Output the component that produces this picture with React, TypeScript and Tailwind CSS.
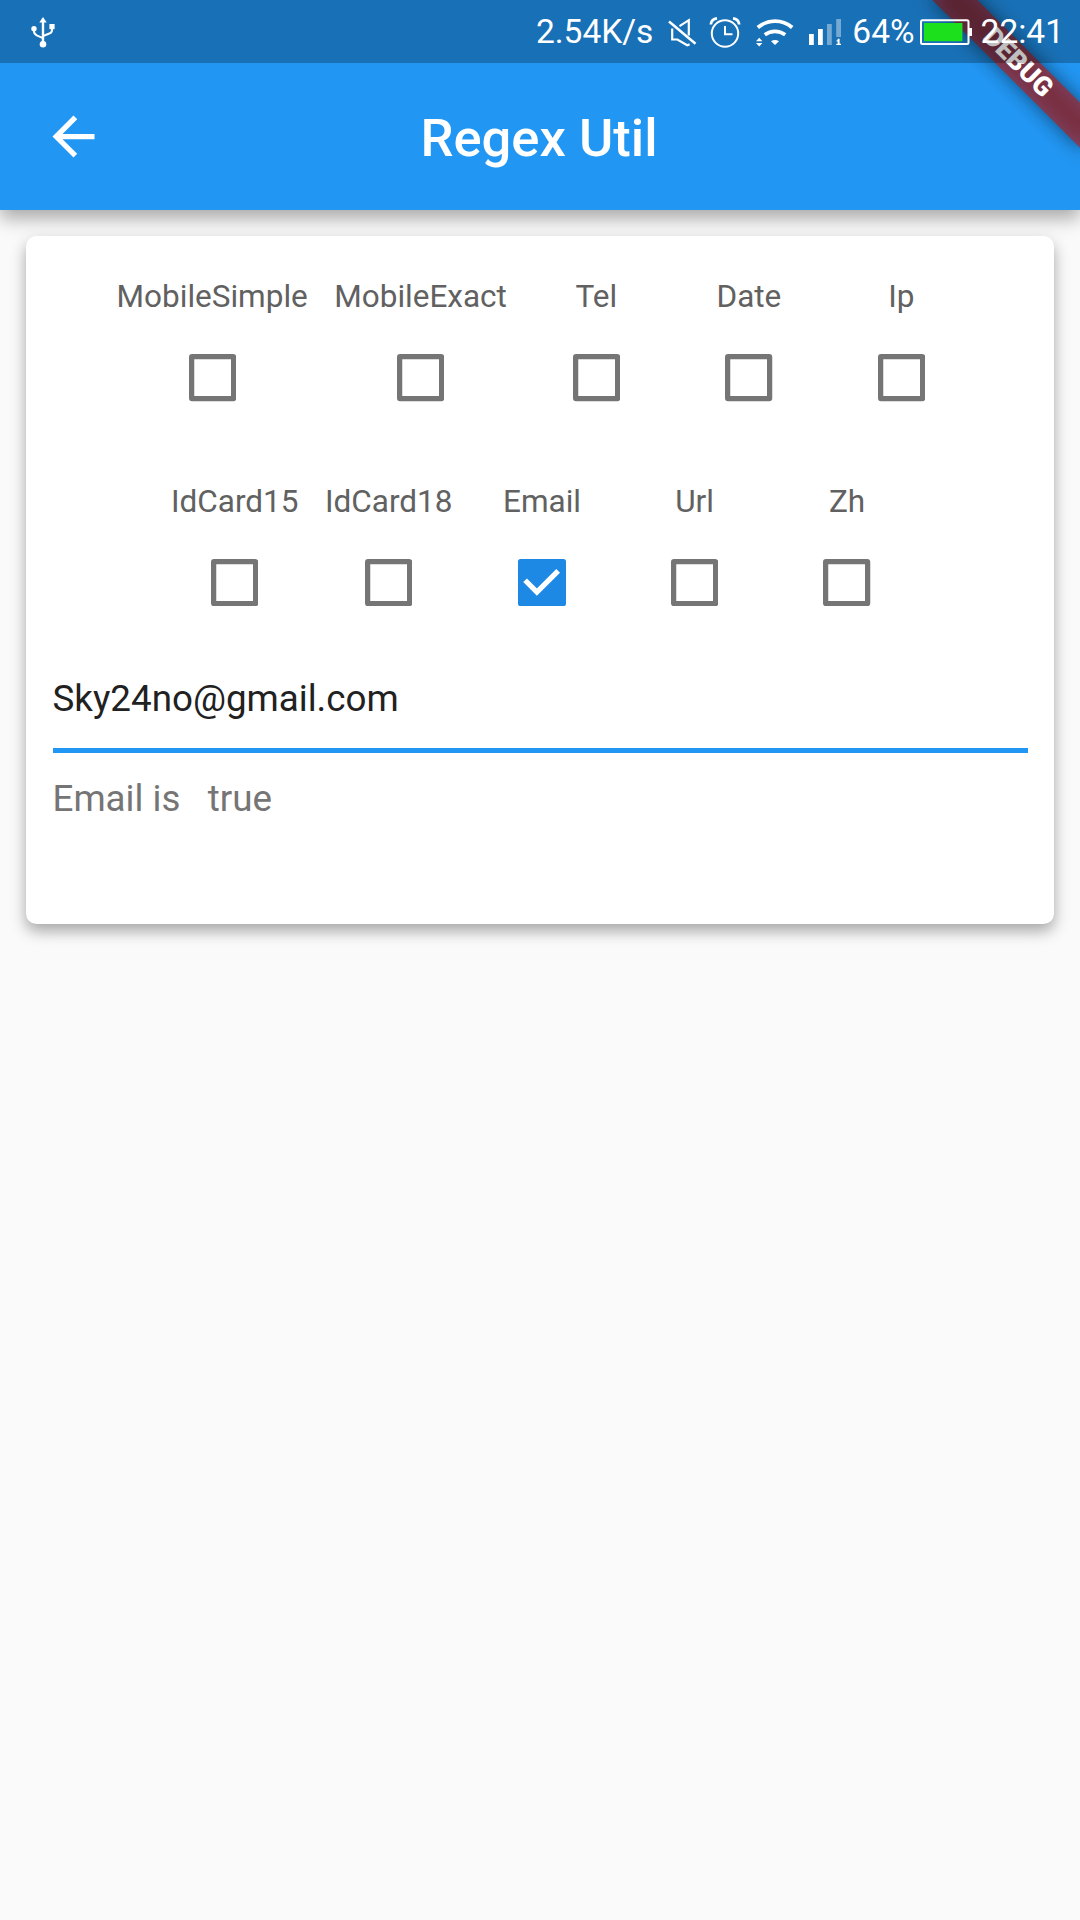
import React from "react";

function UsbIcon() {
  return (
    <svg className="h-[34px] w-[28px]" viewBox="29 15 28 34" fill="none" stroke="#fff" strokeWidth="2">
      <path d="M43 20v23" strokeWidth="2.4" />
      <path d="M43 17l3.7 5.5h-7.4z" fill="#fff" stroke="none" />
      <circle cx="43" cy="44.2" r="3.3" fill="#fff" stroke="none" />
      <circle cx="34" cy="28.7" r="2.7" fill="#fff" stroke="none" />
      <rect x="49.4" y="24" width="5.2" height="5.2" fill="#fff" stroke="none" />
      <path d="M34 29v2.2c0 2.2 1 3.4 3.2 4.4l5.8 2.6" />
      <path d="M52 29v1.3c0 2-1 2.8-3.2 3.5L43 36" />
    </svg>
  );
}

function MuteIcon() {
  return (
    <svg className="h-[32px] w-[30px]" viewBox="667 15 30 32" fill="none" stroke="#fff" strokeWidth="2.2">
      <path d="M669 20.500l26.500 22.300" strokeWidth="2.500" />
      <path d="M679.500 25.200l9.300-6v15.300" />
      <path d="M672.200 27.500v11h5.200l9.800 5.800 2.400-.9" />
    </svg>
  );
}

function AlarmIcon() {
  return (
    <svg className="h-[34px] w-[34px]" viewBox="708 15 34 34" fill="none" stroke="#fff" strokeWidth="2">
      <circle cx="725" cy="33.500" r="13.200" />
      <path d="M725 26v8.300h7.500" />
      <path d="M710.800 24.500c.3-3.500 2.700-5.900 6.200-6.200M739.200 24.500c-.3-3.500-2.700-5.900-6.200-6.200" strokeWidth="2.800" />
    </svg>
  );
}

function WifiIcon() {
  return (
    <svg className="h-[32px] w-[40px]" viewBox="755 15 40 32" fill="none" stroke="#fff">
      <path d="M757.800 26.500c10-8.400 24.400-8.400 34.400 0" strokeWidth="3.800" />
      <path d="M764.800 33.800c6-4.600 14.400-4.600 20.400 0" strokeWidth="3.600" />
      <path d="M771 40.200c2.500-1.600 5.500-1.600 8 0l-4 3.900z" fill="#fff" stroke="none" />
      <path d="M756 40.200l3.200-3.400 3.200 3.400zM756 42l3.200 3.400 3.200-3.400z" fill="#fff" stroke="none" />
    </svg>
  );
}

function SignalIcon() {
  return (
    <svg className="h-[30px] w-[34px]" viewBox="808 16 34 30" fill="#fff">
      <path d="M809 33h4.800v11H809zM818 28h4.800v16H818z" />
      <path d="M827 23h4.800v21H827zM836.200 18h4.800v18h-4.800z" opacity=".4" />
      <path d="M837.600 37.800h2v1.400h-2zM836.600 39.200h3v3.500h1.400v1.300h-4.700v-1.300h1.400v-2.100h-1.100z" />
    </svg>
  );
}

function BatteryIcon() {
  return (
    <svg className="h-[28px] w-[54px]" viewBox="919 17 54 28">
      <rect x="921" y="19.200" width="47.500" height="23.800" rx="1.500" fill="none" stroke="#fff" strokeWidth="2" />
      <rect x="924" y="22" width="38.400" height="18.200" fill="#1de01d" />
      <path d="M969 27h3v8h-3z" fill="#fff" />
    </svg>
  );
}

function StatusBar() {
  return (
    <div className="absolute inset-x-0 top-0 flex h-[63px] items-center bg-black/25 text-[33.5px] leading-none text-white">
      <div className="ml-[29px] mt-px">
        <UsbIcon />
      </div>
      <div className="ml-auto mr-[16px] flex items-center">
        <span className="mr-[14px]">2.54K/s</span>
        <MuteIcon />
        <div className="ml-[11px] mr-[13px] mt-px">
          <AlarmIcon />
        </div>
        <WifiIcon />
        <div className="ml-[13px] mr-[10px]">
          <SignalIcon />
        </div>
        <span>64%</span>
        <div className="ml-[4px] mr-[8px]">
          <BatteryIcon />
        </div>
        <span>22:41</span>
      </div>
    </div>
  );
}

function DebugBanner() {
  return (
    <div className="pointer-events-none absolute right-0 top-0 h-[210px] w-[210px] overflow-hidden">
      <div className="absolute left-[106px] top-[73px] h-[31.5px] w-[210px] origin-[105px_-73.5px] rotate-45">
        <div className="absolute inset-0 bg-black/50 blur-[9.6px]" />
        <div className="relative flex h-full items-center justify-center bg-[#b71c1ca0] text-[26.8px] font-black leading-none text-white">
          DEBUG
        </div>
      </div>
    </div>
  );
}

function Checkbox({ checked }: { checked?: boolean }) {
  return (
    <div className="flex h-[126px] w-[126px] items-center justify-center">
      {checked ? (
        <div className="h-[47.25px] w-[47.25px] rounded-[2.6px] bg-[#1e88e5]">
          <svg className="h-full w-full" viewBox="0 0 18 18" fill="none" stroke="#fff" strokeWidth="2">
            <path d="M2.7 8.100L7.200 12.600L15.300 4.500" />
          </svg>
        </div>
      ) : (
        <svg className="h-[47.25px] w-[47.25px]" viewBox="0 0 18 18" fill="none" stroke="#757575" strokeWidth="2">
          <rect x="1" y="1" width="16" height="16" rx=".15" strokeLinejoin="round" />
        </svg>
      )}
    </div>
  );
}

function OptionRow({ labels, selected }: { labels: string[]; selected?: string }) {
  return (
    <div className="flex justify-center gap-[26.5px] pl-px">
      {labels.map((label) => (
        <div key={label} className="flex flex-col items-center">
          <span className="h-[36.75px] pt-px text-[31.5px] leading-[36.75px] text-[#616161]">{label}</span>
          <Checkbox checked={label === selected} />
        </div>
      ))}
    </div>
  );
}

export default function App() {
  return (
    <div className="relative h-[1920px] w-[1080px] overflow-hidden bg-[#fafafa] font-['Roboto',sans-serif]">
      <header className="h-[210px] bg-[#2196f3] pt-[63px] shadow-[0_8px_18px_rgba(0,0,0,0.34)]">
        <div className="grid h-[147px] grid-cols-[147px_1fr_147px] items-center">
          <svg className="ml-[42px] h-[63px] w-[63px]" viewBox="0 0 24 24" fill="#fff">
            <path d="M20 11H7.830l5.590-5.590L12 4l-8 8 8 8 1.410-1.410L7.830 13H20v-2z" />
          </svg>
          <h1 className="pr-[2px] pt-[4px] text-center text-[52.5px] font-medium leading-none text-white">Regex Util</h1>
        </div>
      </header>

      <main className="mx-[26.25px] mt-[26.25px] h-[687.75px] rounded-[10.5px] bg-white px-[26.25px] pt-[42px] shadow-[0_7px_15px_rgba(0,0,0,0.34)]">
        <div className="flex flex-col gap-[42px]">
          <OptionRow labels={["MobileSimple", "MobileExact", "Tel", "Date", "Ip"]} />
          <OptionRow labels={["IdCard15", "IdCard18", "Email", "Url", "Zh"]} selected="Email" />
        </div>
        <div className="mt-[31px] h-[76.5px] border-b-[5px] border-[#2196f3] text-[36.75px] leading-[43px] text-[#212121]">
          Sky24no@gmail.com
        </div>
        <p className="mt-[24px] whitespace-pre text-[36.75px] leading-[43px] text-[#757575]">Email is   true</p>
      </main>

      <DebugBanner />
      <StatusBar />
    </div>
  );
}
